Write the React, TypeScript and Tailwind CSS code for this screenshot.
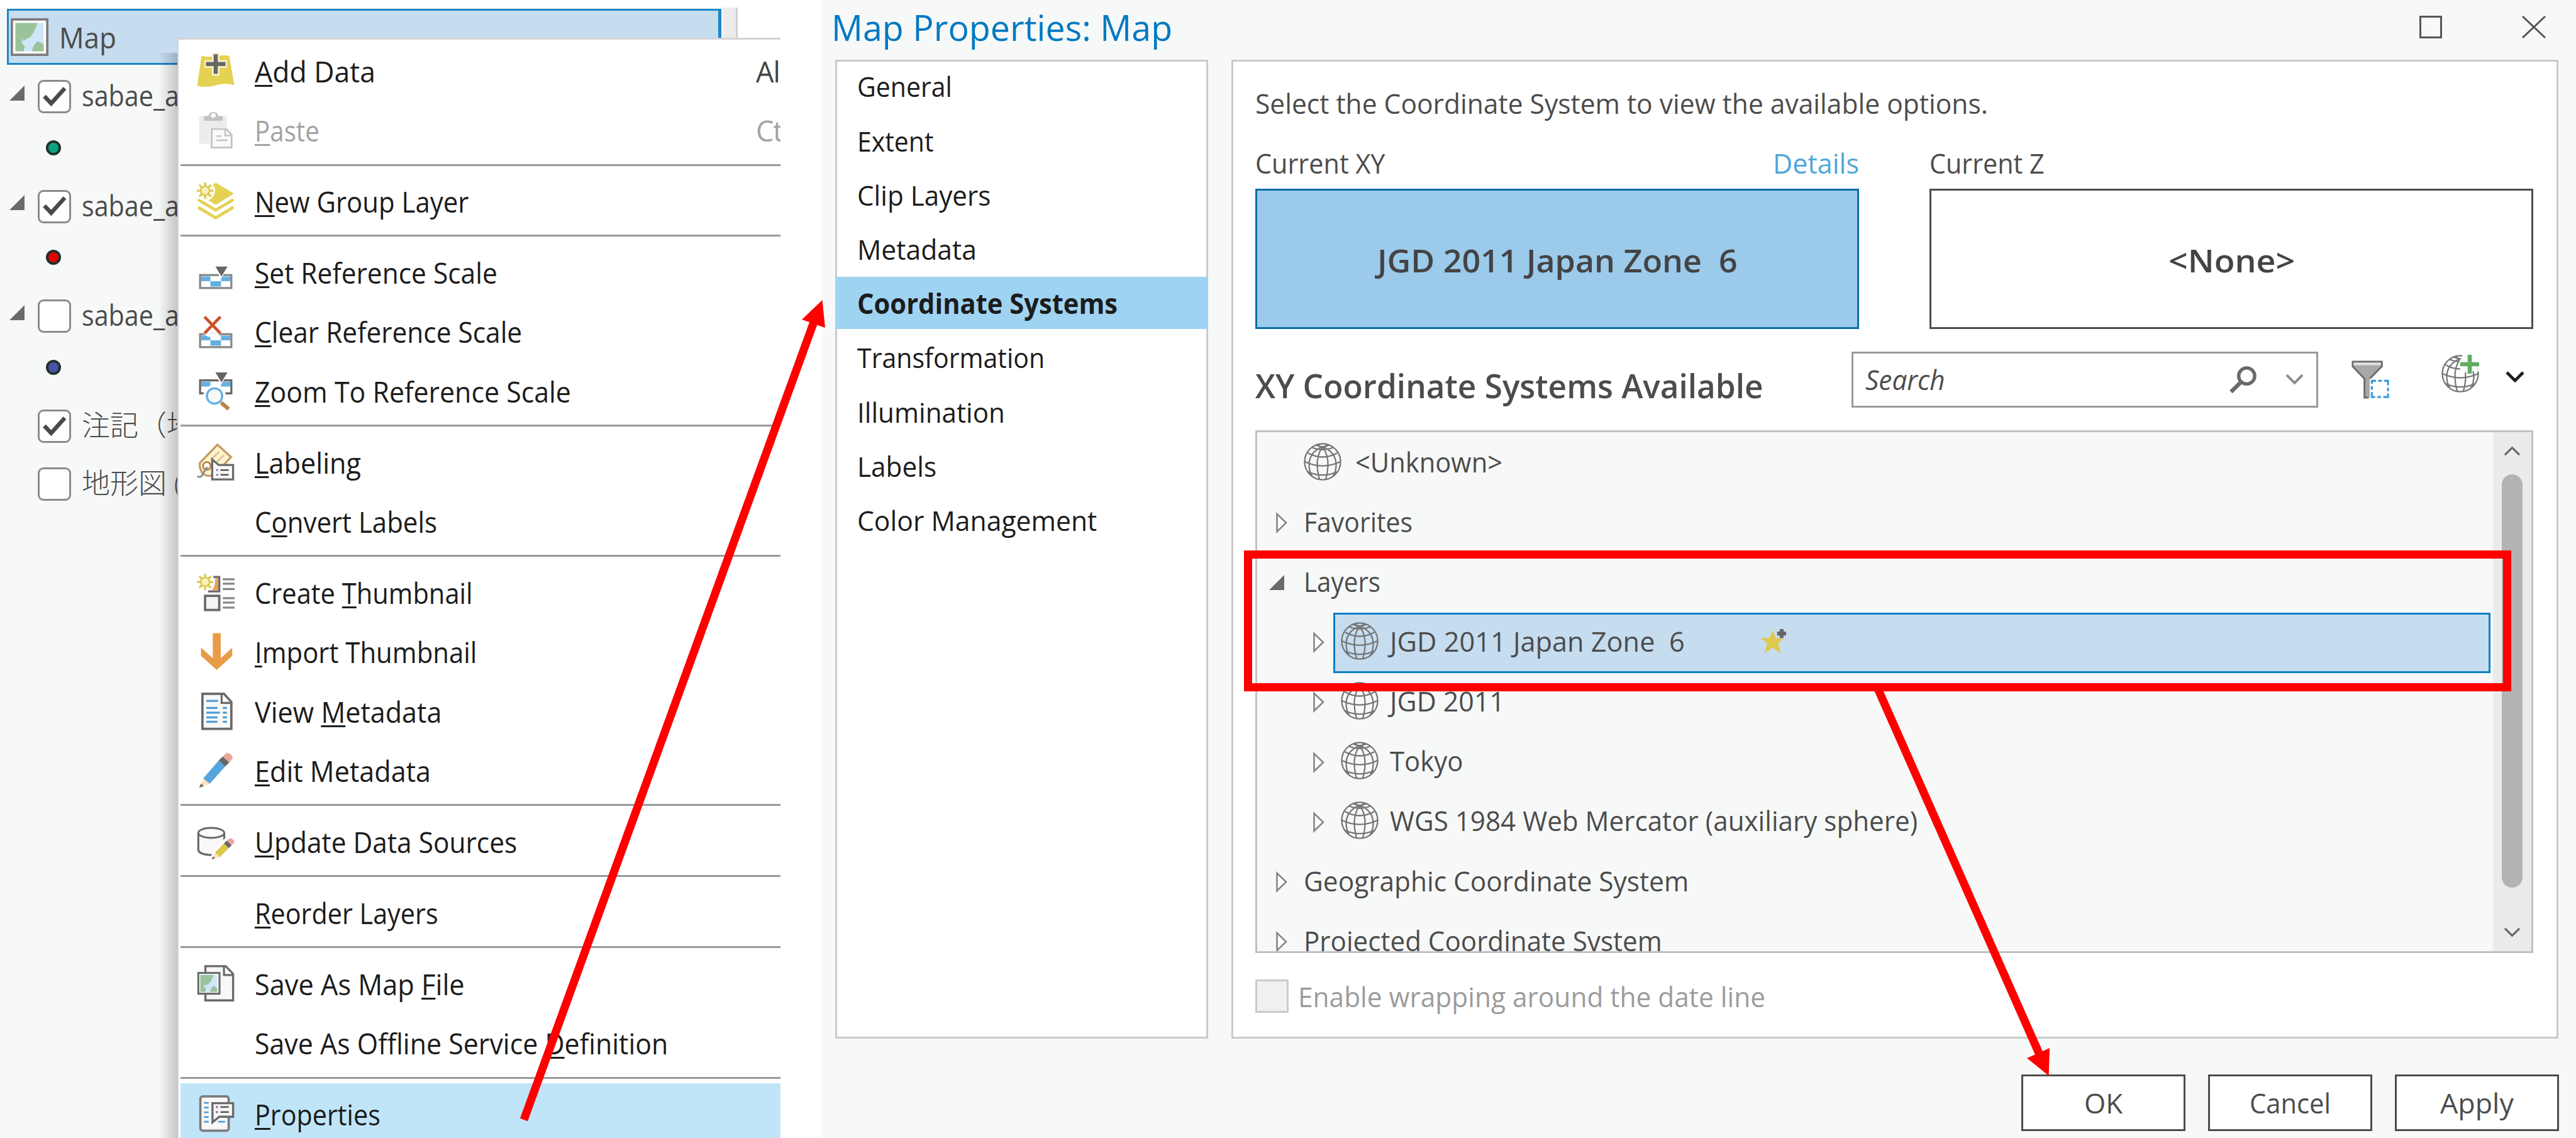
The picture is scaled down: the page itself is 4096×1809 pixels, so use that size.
import { useLayoutEffect, useRef, useState, type ReactNode } from "react";

/* Single line of text drawn to a fixed advance width. */
function Fit({ w, className = "", children }: { w: number; className?: string; children: ReactNode }) {
  const ref = useRef<HTMLSpanElement>(null);
  const [scale, setScale] = useState(1);
  useLayoutEffect(() => {
    if (ref.current) setScale((w + 1) / ref.current.offsetWidth);
  }, [w]);
  return (
    <span className="block shrink-0 whitespace-pre" style={{ width: w + 1 }}>
      <span ref={ref} className={"inline-block origin-left whitespace-pre " + className} style={{ transform: `scaleX(${scale})` }}>
        {children}
      </span>
    </span>
  );
}

function U({ children }: { children: ReactNode }) {
  return (
    <span className="underline decoration-[3px] underline-offset-[4px] [text-decoration-skip-ink:none]">{children}</span>
  );
}

function Icon({ children, className = "size-[60px]" }: { children?: ReactNode; className?: string }) {
  return (
    <svg viewBox="0 0 64 64" className={"block shrink-0 overflow-visible " + className} fill="none">
      {children}
    </svg>
  );
}

function Sun({ cx, cy }: { cx: number; cy: number }) {
  const rays = [0, 45, 90, 135, 180, 225, 270, 315];
  return (
    <g transform={`translate(${cx} ${cy})`}>
      {rays.map((a) => (
        <path key={a} d="M0 -7V-14" stroke="#dcc746" strokeWidth="3.4" transform={`rotate(${a})`} />
      ))}
      <circle r="7.5" fill="#f6f0bd" stroke="#dcc746" strokeWidth="2.6" />
    </g>
  );
}

const AddDataIcon = () => (
  <Icon>
    <path d="M8 6Q20 9 32 7Q44 4 55 6L63.5 56Q48 51 33 56Q16 61 .5 57Z" fill="#e4d252" />
    <path d="M32 1V40M13 20H51" stroke="#f7f1c8" strokeWidth="13" />
    <path d="M32 3.500V36.500M15.500 20H48.500" stroke="#666" strokeWidth="7" />
  </Icon>
);

const PasteIcon = () => (
  <Icon>
    <path d="M4 8H51V28H22V55H4Z" fill="#ececec" />
    <path d="M12 8H20Q20 1 28 1Q36 1 36 8H44V16H12Z" fill="#c2c2c2" />
    <circle cx="28" cy="7" r="4" fill="#fff" />
    <path d="M25 30H50L59 40V61.500H25Z" fill="#fafafa" stroke="#c2c2c2" strokeWidth="3" />
    <path d="M48 30V41H59M33 42H42M33 49H52" stroke="#c2c2c2" strokeWidth="2.600" />
  </Icon>
);

const GroupLayerIcon = () => (
  <Icon>
    <path d="M32 .5L63 19L32 38L3 20Z" fill="#e4d252" />
    <path d="M2 29L32 47L62 29M2 42L32 60L62 42" stroke="#e4d252" strokeWidth="5" />
    <circle cx="14" cy="14" r="17" fill="#fff" fillOpacity=".85" />
    <Sun cx={14} cy={14} />
  </Icon>
);

function Bar({ y, stroke = "#888" }: { y: number; stroke?: string }) {
  return (
    <g transform={`translate(0 ${y})`}>
      <rect x="5.500" y="1.500" width="53" height="22" fill="#fff" stroke={stroke} strokeWidth="3.500" />
      <path d="M7.500 4H23V12H7.500ZM23 12H41V21H23ZM41 4H57V12H41Z" fill="#63b0e3" />
    </g>
  );
}

const SetScaleIcon = () => (
  <Icon>
    <Bar y={35} />
    <path d="M28 19H55L41 43Z" fill="#fff" />
    <path d="M31.500 22H52L41.700 39Z" fill="#666" />
  </Icon>
);

const ClearScaleIcon = () => (
  <Icon>
    <Bar y={35} />
    <path d="M11 35H41L33 41H19Z" fill="#fff" />
    <path d="M13 7L40 35M40 7L13 35" stroke="#cc5229" strokeWidth="5" />
  </Icon>
);

const ZoomScaleIcon = () => (
  <Icon>
    <Bar y={12} stroke="#666" />
    <path d="M28 -3H55L41 21Z" fill="#fff" />
    <path d="M31.500 0H52L41.700 17Z" fill="#666" />
    <circle cx="30" cy="40" r="19" fill="#fff" />
    <path d="M41 51L54 62" stroke="#b48649" strokeWidth="6.500" />
    <circle cx="30" cy="40" r="13" fill="#f8f8f8" stroke="#63b0e3" strokeWidth="3.600" />
  </Icon>
);

const LabelingIcon = () => (
  <Icon>
    <path d="M35 2L58 23L30 53Q18 57 11 52Q4 44 5 33Z" fill="#fbf4ce" stroke="#c39a63" strokeWidth="3.500" />
    <path d="M24 27L38 14M34 31L46 20" stroke="#ddb98e" strokeWidth="2.500" />
    <circle cx="17" cy="38" r="6.500" fill="#fff" stroke="#b48649" strokeWidth="3" />
    <path d="M1 55Q6 60 10 52Q14 44 18 40" stroke="#888" strokeWidth="3" />
    <path d="M26 61V27L37 36.500H61.500V61Z" fill="#f8f8f8" stroke="#6a6a6a" strokeWidth="3.500" />
    <path d="M40 45H54M40 53H54" stroke="#555" strokeWidth="2.600" />
    <path d="M33 45H36M33 53H36" stroke="#7059b5" strokeWidth="2.800" />
  </Icon>
);

const CreateThumbIcon = () => (
  <Icon>
    <path d="M28 5.500H38V30H19" fill="#fff" stroke="#6a6a6a" strokeWidth="3.600" />
    <path d="M31 7.500H36V28H25Q32 22 31 7.500Z" fill="#e9a150" />
    <Sun cx={14} cy={14} />
    <rect x="14" y="37.500" width="24" height="24" fill="#f4f4f4" stroke="#6a6a6a" strokeWidth="4" />
    <path d="M44 9.500H64M44 17H64M44 26H64M44 41.500H64M44 49H64M44 57.500H64" stroke="#888" strokeWidth="3.400" />
  </Icon>
);

const ImportIcon = () => (
  <Icon>
    <path d="M27 .5H40.500V43L60 25V39L33.700 63L7 39V25L27 43Z" fill="#e99c47" />
  </Icon>
);

const ViewMetaIcon = () => (
  <Icon>
    <path d="M9.500 2H46L58.500 16V61.500H9.500Z" fill="#f8f8f8" stroke="#6a6a6a" strokeWidth="4" />
    <path d="M42 3V17.500H58" fill="#fff" stroke="#6a6a6a" strokeWidth="3.400" />
    <path d="M16 14H36M16 26H35M16 34H39M16 42H35M16 49.500H35M44 26H51M44 34H51M44 42H51M44 49.500H51" stroke="#4d9fd6" strokeWidth="3.300" />
  </Icon>
);

const EditMetaIcon = () => (
  <Icon>
    <path d="M4 61L12 44L23 54Z" fill="#fbe3c2" />
    <path d="M4 61L7 54L12 58Z" fill="#666" />
    <path d="M11 45L37 15L48 25L22 54Z" fill="#54a6dc" />
    <path d="M37 15L44 8L55 18L48 25Z" fill="#666" />
    <path d="M44 8L50 2Q54 1 58 5Q62 9 60 12L55 18Z" fill="#e9a597" />
  </Icon>
);

const UpdateIcon = () => (
  <Icon>
    <path d="M2.500 17V46Q4 54 24 54.500Q36 54.500 42 51L46 30V17Z" fill="#f8f8f8" />
    <path d="M2.500 17V46Q4 54 25 54.500M46.500 17V30" stroke="#6a6a6a" strokeWidth="3.400" />
    <ellipse cx="24.500" cy="17" rx="22" ry="8.500" fill="#fbfbfb" stroke="#6a6a6a" strokeWidth="3.200" />
    <path d="M22 64L29 46L50 24L68 34L42 62Z" fill="#fff" />
    <path d="M25 62.500L31 50L39 58Z" fill="#fbe3c2" />
    <path d="M25 62.500L27.500 57L31 60Z" fill="#666" />
    <path d="M31 50L46 35L54 43L39 58Z" fill="#dcc746" />
    <path d="M46 35L51 30L59 38L54 43Z" fill="#666" />
    <path d="M51 30L55 27Q59 25 62 29Q65 32 62 35L59 38Z" fill="#e9a597" />
  </Icon>
);

function MapTile() {
  return (
    <g>
      <rect x="2" y="2" width="60" height="60" fill="#fff" stroke="#7c7c7c" strokeWidth="4" />
      <rect x="8" y="8" width="48" height="48" fill="#cfe6f8" />
      <path d="M8 8H46L39 24L33 32L22 38L19 34V42L24 48L22 56H8ZM38 48L45 39L53 42L56 46V56H36Z" fill="#9bc39b" />
    </g>
  );
}

const SaveMapIcon = () => (
  <Icon>
    <path d="M14.500 2H49L61.500 15V60H14.500Z" fill="#f8f8f8" stroke="#6a6a6a" strokeWidth="3.600" />
    <path d="M46 3V17H61" fill="#fff" stroke="#6a6a6a" strokeWidth="3.400" />
    <g transform="translate(1 12) scale(.6)">
      <MapTile />
    </g>
    <rect x="2.500" y="13.500" width="36" height="35" stroke="#6a6a6a" strokeWidth="3.200" />
  </Icon>
);

const PropertiesIcon = () => (
  <Icon>
    <rect x="6" y="2" width="48" height="58" rx="4" fill="#f8f8f8" stroke="#7c7c7c" strokeWidth="4" />
    <path d="M12 13H20M12 21H20M12 29H20M12 37H20M12 45H20M36 45H48" stroke="#4d9fd6" strokeWidth="3" />
    <path d="M26.500 46V13.500H61.500V36.500H38Z" fill="#f4f4f4" stroke="#6a6a6a" strokeWidth="3.600" />
    <path d="M40 20H54M40 28.500H54" stroke="#555" strokeWidth="2.800" />
    <path d="M32.500 20H35.500M32.500 28.500H35.500" stroke="#7059b5" strokeWidth="3" />
  </Icon>
);

function GlobeLines() {
  return (
    <g stroke="#757575" strokeWidth="2.400">
      <circle cx="32" cy="32" r="30.500" />
      <path d="M32 7Q22 20 23 40Q24 54 27 62M32 7Q42 20 41 40Q40 54 37 62" />
      <path d="M31 7Q10 16 9 36Q9 48 14 56M33 7Q54 16 55 36Q55 48 50 56" />
      <path d="M14 8Q32 15 50 8M21 4Q32 9 43 4" />
      <path d="M7 17Q32 31 57 17M2 32Q32 46 62 32M7 49Q32 60 57 49" />
      <path d="M24 3L32 9L40 3" />
    </g>
  );
}

const Globe = () => (
  <Icon>
    <GlobeLines />
  </Icon>
);

const GlobePlus = () => (
  <Icon>
    <GlobeLines />
    <path d="M38 -3H66V28H54L36 30Q28 22 30 12Z" fill="#fff" fillOpacity=".93" />
    <path d="M48 0V32M32 16H64" stroke="#5fae5f" strokeWidth="7" />
  </Icon>
);

const FilterIcon = () => (
  <Icon>
    <path d="M2 2H52V10L31 31V63H22V31L2 10Z" fill="#a8a8a8" />
    <path d="M3 3H51V8H3Z" fill="#e2e2e2" />
    <path d="M31 31L51.500 10V2H2V10L22 31V63H29" stroke="#6a6a6a" strokeWidth="3" />
    <path d="M31 31H64V64H31Z" fill="#fff" />
    <rect x="34.500" y="34.500" width="27.500" height="27.500" stroke="#3c9ad8" strokeWidth="3.400" strokeDasharray="7 4 6 4 7 0" />
  </Icon>
);

function Star() {
  return (
    <svg viewBox="0 0 44 42" className="h-[40px] w-[43px] shrink-0 overflow-visible">
      <path d="M20 3L25 16H40L29 25L34 42L20 32L6 42L11 25L0 16H15Z" fill="#dfc94c" />
      <path d="M35 0V17M26.500 8.500H43.500" stroke="#c6dcef" strokeWidth="9" />
      <path d="M35 1V16M27.500 8.500H42.500" stroke="#666" strokeWidth="6.500" />
    </svg>
  );
}

function Chevron({ className, up = false, sw = 4 }: { className: string; up?: boolean; sw?: number }) {
  return (
    <svg viewBox="0 0 30 18" className={"block shrink-0 overflow-visible " + className} fill="none">
      <path d={up ? "M2 16L15 3L28 16" : "M2 2L15 15L28 2"} stroke="currentColor" strokeWidth={sw} />
    </svg>
  );
}

const OpenArrow = ({ className = "" }: { className?: string }) => (
  <svg viewBox="0 0 24 24" className={"size-[24px] shrink-0 " + className}>
    <path d="M24 0V24H0Z" fill="#6a6a6a" />
  </svg>
);

const ClosedArrow = () => (
  <svg viewBox="0 0 18 34" className="mt-[5px] h-[34px] w-[18px] shrink-0" fill="none">
    <path d="M1.500 3V31L16 17Z" fill="#fff" stroke="#858585" strokeWidth="2.600" />
  </svg>
);

/* ---------- Contents pane ---------- */

function Check({ on }: { on: boolean }) {
  return (
    <span className="flex size-[53px] shrink-0 items-center justify-center rounded-[9px] border-[3px] border-[#8b8b8b] bg-white">
      {on && (
        <svg viewBox="0 0 40 34" className="h-[32px] w-[40px]" fill="none">
          <path d="M2.500 16L14 28L37 2.500" stroke="#4a4a4a" strokeWidth="7" />
        </svg>
      )}
    </span>
  );
}

function LayerRow({ on, arrow, children }: { on: boolean; arrow?: boolean; children: ReactNode }) {
  return (
    <div className="flex h-[81px] items-center pl-[15px]">
      <span className="w-[45px] shrink-0 pb-[12px]">{arrow && <OpenArrow />}</span>
      <Check on={on} />
      <div className="ml-[17px] whitespace-pre pb-[3px] text-[45px] leading-[60px] text-[#4c4c4c]">{children}</div>
    </div>
  );
}

function Dot({ className }: { className: string }) {
  return (
    <div className="flex h-[81px] items-center pl-[73px]">
      <span className={"size-[24px] rounded-full border-[4px] border-[#22302c] " + className} />
    </div>
  );
}

function Contents() {
  const layers = [
    { on: true, dot: "bg-[#0ba37f]" },
    { on: true, dot: "bg-[#e60000]" },
    { on: false, dot: "bg-[#4855ad]" },
  ];
  return (
    <div className="flex h-full w-[1173px] bg-[#f7f9f8]">
      <div className="flex w-[1147px] flex-col pl-[11px]">
        <div className="mt-[2px] flex h-[89px] shrink-0 items-center border-[3px] border-r-[5px] border-[#1a86c8] bg-[#c6dcef] pl-[3px]">
          <Icon className="size-[60px]">
            <MapTile />
          </Icon>
          <div className="ml-[17px] pt-[2px] text-[45px] leading-[60px] text-[#4c4c4c]">
            <Fit w={90}>Map</Fit>
          </div>
        </div>
        <div className="-ml-[11px] mt-[10px] w-[283px] overflow-hidden">
          {layers.map((l, i) => (
            <div key={i} className="h-[174.7px]">
              <LayerRow on={l.on} arrow>
                <Fit w={154}>sabae_a</Fit>
              </LayerRow>
              <Dot className={l.dot} />
            </div>
          ))}
          <LayerRow on>
            <span className="font-light">注記（地</span>
          </LayerRow>
          <div className="h-[10.6px]" />
          <LayerRow on={false}>
            <span className="font-light">地形図 (</span>
          </LayerRow>
        </div>
      </div>
      <div className="ml-[3px] w-[23px] border-r-[3px] border-[#cfd0d4] bg-[#ebebeb]" />
    </div>
  );
}

/* ---------- Context menu ---------- */

function Item({ icon, w, off, hot, right, children }: { icon?: ReactNode; w: number; off?: boolean; hot?: boolean; right?: string; children: ReactNode }) {
  return (
    <div
      className={
        "flex h-[94.4px] shrink-0 items-center pl-[26px] pt-[3px] text-[45px] leading-[60px] " +
        (off ? "text-[#a3a3a3] " : "text-[#1c1c1c] ") +
        (hot ? "bg-[#c0e5f9]" : "")
      }
    >
      <span className="mr-[32px] w-[60px] shrink-0">{icon}</span>
      <div className="pt-[2px]">
        <Fit w={w}>{children}</Fit>
      </div>
      {right && (
        <span className={"ml-auto w-[39px] shrink-0 overflow-hidden whitespace-pre pt-[2px] tracking-[-1px] " + (off ? "" : "text-[#444]")}>
          {right}
        </span>
      )}
    </div>
  );
}

const Sep = () => (
  <div className="flex h-[18.5px] shrink-0 items-center">
    <div className="h-[3px] w-full bg-[#999]" />
  </div>
);

function ContextMenu() {
  return (
    <div className="absolute left-[282px] top-[60px] h-[1760px] w-[959px] overflow-hidden border-l-[2px] border-t-[3px] border-[#d3d3d6] bg-white pl-[3px]">
      <div className="flex flex-col pt-[1px]">
        <Item icon={<AddDataIcon />} w={191} right="Al"><U>A</U>dd Data</Item>
        <Item icon={<PasteIcon />} w={102} off right="Ct"><U>P</U>aste</Item>
        <Sep />
        <Item icon={<GroupLayerIcon />} w={339}><U>N</U>ew Group Layer</Item>
        <Sep />
        <Item icon={<SetScaleIcon />} w={385}><U>S</U>et Reference Scale</Item>
        <Item icon={<ClearScaleIcon />} w={424}><U>C</U>lear Reference Scale</Item>
        <Item icon={<ZoomScaleIcon />} w={502}><U>Z</U>oom To Reference Scale</Item>
        <Sep />
        <Item icon={<LabelingIcon />} w={168}><U>L</U>abeling</Item>
        <Item w={289}>C<U>o</U>nvert Labels</Item>
        <Sep />
        <Item icon={<CreateThumbIcon />} w={346}>Create <U>T</U>humbnail</Item>
        <Item icon={<ImportIcon />} w={352}><U>I</U>mport Thumbnail</Item>
        <Item icon={<ViewMetaIcon />} w={296}>View <U>M</U>etadata</Item>
        <Item icon={<EditMetaIcon />} w={279}><U>E</U>dit Metadata</Item>
        <Sep />
        <Item icon={<UpdateIcon />} w={416}><U>U</U>pdate Data Sources</Item>
        <Sep />
        <Item w={291}><U>R</U>eorder Layers</Item>
        <Sep />
        <Item icon={<SaveMapIcon />} w={333}>Save As Map <U>F</U>ile</Item>
        <Item w={656}>Save As Offline Service <U>D</U>efinition</Item>
        <Sep />
        <Item icon={<PropertiesIcon />} w={199} hot><U>P</U>roperties</Item>
      </div>
    </div>
  );
}

/* ---------- Dialog ---------- */

function Sidebar() {
  const items: [string, number][] = [
    ["General", 150],
    ["Extent", 121],
    ["Clip Layers", 211],
    ["Metadata", 189],
    ["Coordinate Systems", 413],
    ["Transformation", 297],
    ["Illumination", 234],
    ["Labels", 125],
    ["Color Management", 380],
  ];
  return (
    <div className="flex w-[593px] shrink-0 flex-col gap-[3.4px] bg-white outline-[3px] -outline-offset-[3px] outline-[#c9cbcb]">
      {items.map(([t, w]) => (
        <div
          key={t}
          className={
            "flex h-[82.8px] items-center pl-[35px] pt-[2px] text-[44px] leading-[60px] text-[#1c1c1c] " +
            (t === "Coordinate Systems" ? "relative bg-[#9fd3f2] font-bold" : "")
          }
        >
          <Fit w={w}>{t}</Fit>
        </div>
      ))}
    </div>
  );
}

function Row({ children, pad = "" }: { children: ReactNode; pad?: string }) {
  return <div className={"flex h-[95.1px] shrink-0 items-center " + pad}>{children}</div>;
}

function Nested({ t, w, sel }: { t: string; w: number; sel?: boolean }) {
  return (
    <Row pad="pl-[89px]">
      <ClosedArrow />
      <div
        className={
          "ml-[14px] mr-[4px] flex h-[96px] flex-1 items-center border-[3px] pl-[9px] " +
          (sel ? "translate-y-[3px] border-[#0a7fc5] bg-[#c6dcef]" : "border-transparent")
        }
      >
        <div className={"flex items-center " + (sel ? "-translate-y-[3px]" : "")}>
          <Globe />
          <div className="ml-[18px]">
            <Fit w={w}>{t}</Fit>
          </div>
          {sel && (
            <div className="ml-[120px]">
              <Star />
            </div>
          )}
        </div>
      </div>
    </Row>
  );
}

function Closed({ t, w }: { t: string; w: number }) {
  return (
    <Row pad="pl-[30px]">
      <ClosedArrow />
      <div className="ml-[26px] pt-px">
        <Fit w={w}>{t}</Fit>
      </div>
    </Row>
  );
}

function SystemsList() {
  return (
    <div className="mt-[36.5px] flex h-[831px] shrink-0 border-[3px] border-[#bfc1c7] bg-[#f7f9f8]">
      <div className="flex-1 overflow-hidden text-[44px] leading-[60px] text-[#4c4c4c]">
        <div className="-mt-px flex flex-col">
          <Row pad="pl-[74px]">
            <Globe />
            <div className="ml-[22px] pt-px">
              <Fit w={233}>{"<Unknown>"}</Fit>
            </div>
          </Row>
          <Closed t="Favorites" w={172} />
          <Row pad="pl-[19px]">
            <OpenArrow className="mt-[5px]" />
            <div className="ml-[31px]">
              <Fit w={121}>Layers</Fit>
            </div>
          </Row>
          <Nested t="JGD 2011 Japan Zone  6" w={468} sel />
          <Nested t="JGD 2011" w={182} />
          <Nested t="Tokyo" w={115} />
          <Nested t="WGS 1984 Web Mercator (auxiliary sphere)" w={838} />
          <Closed t="Geographic Coordinate System" w={611} />
          <Closed t="Projected Coordinate System" w={569} />
        </div>
      </div>
      <div className="flex w-[61px] shrink-0 flex-col items-center bg-[#ebebeb] text-[#666]">
        <Chevron up sw={3.6} className="mt-[22px] h-[16px] w-[27px]" />
        <div className="mt-[29px] h-[657px] w-[33px] rounded-full bg-[#b3b3b3]" />
        <Chevron sw={3.6} className="mt-[63px] h-[16px] w-[27px]" />
      </div>
    </div>
  );
}

function MainPanel() {
  return (
    <div className="ml-[37px] flex w-[2110px] shrink-0 flex-col border-[3px] border-[#c9cbcb] bg-white pl-[35px] pr-[37px] text-[44px] leading-[60px] text-[#4c4c4c]">
      <div className="mt-[35.5px] h-[60px]">
        <Fit w={1164}>Select the Coordinate System to view the available options.</Fit>
      </div>
      <div className="mt-[35px] flex h-[60px]">
        <Fit w={205}>Current XY</Fit>
        <div className="ml-[617px] text-[#4fa6da]">
          <Fit w={136}>Details</Fit>
        </div>
        <div className="ml-[112px]">
          <Fit w={182}>Current Z</Fit>
        </div>
      </div>
      <div className="mt-[11.5px] flex h-[222.5px] shrink-0 gap-[112px] text-[51px] font-semibold text-[#444]">
        <div className="flex w-[960px] items-center justify-center border-[3px] border-[#0b6ca6] bg-[#9bcaeb] pt-[4px]">
          <Fit w={572}>JGD 2011 Japan Zone  6</Fit>
        </div>
        <div className="flex w-[960px] items-center justify-center border-[3px] border-[#4c4c4c] bg-white pt-[4px]">
          <Fit w={200}>{"<None>"}</Fit>
        </div>
      </div>
      <div className="mt-[36px] flex h-[89px] shrink-0 items-center">
        <div className="w-[948px] shrink-0 pt-[19px] text-[52px] font-semibold">
          <Fit w={807}>XY Coordinate Systems Available</Fit>
        </div>
        <div className="flex h-[89px] w-[742px] shrink-0 items-center border-[3px] border-[#999] pl-[19px] pr-[20px]">
          <div className="italic">
            <Fit w={126}>Search</Fit>
          </div>
          <svg viewBox="0 0 44 44" className="ml-auto size-[43px]" fill="none">
            <circle cx="28" cy="16" r="13" stroke="#6a6a6a" strokeWidth="5.500" />
            <path d="M19 25.500L2.500 42" stroke="#6a6a6a" strokeWidth="6.500" />
          </svg>
          <Chevron className="ml-[46px] h-[18px] w-[29px] text-[#8a8a8a]" />
        </div>
        <div className="ml-[53px]">
          <FilterIcon />
        </div>
        <div className="mb-[18px] ml-[83px]">
          <GlobePlus />
        </div>
        <Chevron sw={4.6} className="mb-[8px] ml-[42px] h-[18px] w-[30px] text-[#1c1c1c]" />
      </div>
      <SystemsList />
      <div className="mt-[41px] flex h-[54px] items-center text-[#9c9c9c]">
        <div className="size-[53px] border-[3px] border-[#c9cbcb] bg-[#eff1f1]" />
        <div className="ml-[15px] pt-px">
          <Fit w={742}>Enable wrapping around the date line</Fit>
        </div>
      </div>
    </div>
  );
}

function Dialog() {
  const buttons: [string, number][] = [
    ["OK", 60],
    ["Cancel", 128],
    ["Apply", 116],
  ];
  return (
    <div className="flex h-full w-[2789px] shrink-0 flex-col bg-[#f7f9f8]">
      <div className="flex h-[95px] shrink-0 items-center pb-[9px] pl-[15px] pr-[48px] text-[57px] leading-[76px] text-[#0079c1]">
        <Fit w={541}>Map Properties: Map</Fit>
        <svg viewBox="0 0 36 36" className="ml-auto size-[36px]" fill="none">
          <path d="M1.500 1.500H34.500V34.500H1.500Z" stroke="#555" strokeWidth="3" />
        </svg>
        <svg viewBox="0 0 38 36" className="ml-[127px] h-[36px] w-[38px]" fill="none">
          <path d="M1 1L37 35M37 1L1 35" stroke="#555" strokeWidth="3" />
        </svg>
      </div>
      <div className="flex h-[1555.500px] shrink-0 pl-[21px]">
        <Sidebar />
        <MainPanel />
      </div>
      <div className="mt-[57.500px] flex justify-end gap-[36px] pr-[27px] text-[44px] leading-[60px] text-[#4c4c4c]">
        {buttons.map(([t, w]) => (
          <div key={t} className="flex h-[89.500px] w-[261px] items-center justify-center border-[3px] border-[#4c4c4c] bg-white">
            <Fit w={w}>{t}</Fit>
          </div>
        ))}
      </div>
    </div>
  );
}

/* Red callout frame and arrows lying over both windows. */
function Annotations() {
  return (
    <>
      <div className="absolute left-[1978px] top-[875px] h-[224px] w-[2015px] border-[13px] border-[#ff0000]" />
      <svg viewBox="0 0 4096 1809" className="absolute left-0 top-0 h-[1809px] w-[4096px]" fill="none">
        <path d="M833 1780L1294 512M2986 1095L3242 1674" stroke="#f00" strokeWidth="13" />
        <path d="M1307.500 477L1312 521L1275 508ZM3257.600 1710L3223 1682L3259 1666Z" fill="#f00" />
      </svg>
    </>
  );
}

export default function App() {
  return (
    <div className="relative flex h-[1809px] w-[4096px] overflow-hidden bg-white font-['Open_Sans','Noto_Sans_CJK_JP',sans-serif]">
      <div className="relative h-full w-[1307px] shrink-0 pt-[12px]">
        <Contents />
        <div className="absolute left-[252px] top-[84px] h-[1725px] w-[30px] bg-linear-to-r from-transparent to-black/20" />
        <ContextMenu />
      </div>
      <Dialog />
      <Annotations />
    </div>
  );
}
